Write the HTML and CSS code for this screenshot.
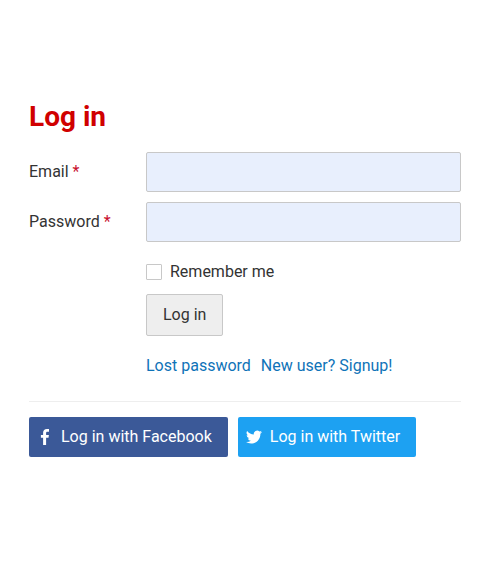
FILE: index.html
```html
<!DOCTYPE html>
<html lang="en">

<head>
    <meta charset="UTF-8">
    <meta name="viewport" content="width=device-width, initial-scale=1.0">
    <title>Log in</title>
    <link rel="stylesheet" href="styles.css">
</head>

<body>
    <main class="login">
        <h1>Log in</h1>

        <form class="login-form">
            <div class="form-group">
                <label for="email">Email <span class="required">*</span></label>
                <input type="email" id="email" class="form-control" required>
            </div>
            <div class="form-group">
                <label for="password">Password <span class="required">*</span></label>
                <input type="password" id="password" class="form-control" required>
            </div>
            <div class="form-actions">
                <label class="remember">
                    <input type="checkbox" id="remember">
                    <span>Remember me</span>
                </label>
                <button type="submit" class="btn-submit">Log in</button>
                <div class="links">
                    <a href="#">Lost password</a>
                    <a href="#">New user? Signup!</a>
                </div>
            </div>
        </form>

        <!-- Social login -->
        <div class="social">
            <a href="#" class="btn-social facebook">
                <svg viewBox="0 0 16 16" width="16" height="16" fill="currentColor">
                    <path d="M6.1 16V8.8H3.9V5.9h2.2V3.8C6.1 1.3 7.6 0 9.9 0c1 0 1.9.1 2.1.1v2.7h-1.5c-1.2 0-1.4.6-1.4 1.4v1.7h2.8l-.4 2.9H9.1V16z" />
                </svg>
                <span>Log in with Facebook</span>
            </a>
            <a href="#" class="btn-social twitter">
                <svg viewBox="0 0 16 16" width="16" height="16" fill="currentColor">
                    <path d="M16 3.04a6.6 6.6 0 0 1-1.89.52 3.3 3.3 0 0 0 1.45-1.82 6.6 6.6 0 0 1-2.09.8A3.28 3.28 0 0 0 7.88 5.53 9.32 9.32 0 0 1 1.11 2.1a3.28 3.28 0 0 0 1.02 4.38 3.3 3.3 0 0 1-1.49-.41v.04a3.28 3.28 0 0 0 2.63 3.22 3.3 3.3 0 0 1-1.48.06 3.28 3.28 0 0 0 3.07 2.28A6.6 6.6 0 0 1 0 13.03a9.29 9.29 0 0 0 5.03 1.47c6.04 0 9.34-5 9.34-9.34l-.01-.42A6.7 6.7 0 0 0 16 3.04z" />
                </svg>
                <span>Log in with Twitter</span>
            </a>
        </div>
    </main>
</body>

</html>
```
FILE: styles.css
```css
:root {
    --primary-color: #d00000;
    --text-color: #333;
    --link-color: #0f73b8;
    --border-color: #c8c8c8;
}

* {
    margin: 0;
    padding: 0;
    box-sizing: border-box;
}

body {
    background-color: #fff;
    color: var(--text-color);
    font-family: Roboto, "Liberation Sans", sans-serif;
    font-size: 16px;
    line-height: 24px;
}

a {
    color: var(--link-color);
    text-decoration: none;
}

.login {
    width: 432px;
    margin: 0 0 0 29px;
    padding-top: 99px;
}

h1 {
    margin-bottom: 17px;
    color: var(--primary-color);
    font-size: 28px;
    font-weight: 700;
    line-height: 36px;
}

.form-group {
    display: grid;
    grid-template-columns: 117px 1fr;
    align-items: center;
    margin-bottom: 10px;
}

.required {
    color: #c8102e;
}

.form-control {
    width: 100%;
    height: 40px;
    padding: 0 10px;
    border: 1px solid var(--border-color);
    border-radius: 2px;
    background-color: #e8effd;
    font: inherit;
}

.form-actions {
    display: flex;
    flex-direction: column;
    align-items: flex-start;
    margin: 18px 0 0 117px;
}

.remember {
    display: flex;
    align-items: center;
    gap: 8px;
    margin-bottom: 10px;
}

.remember input {
    width: 16px;
    height: 16px;
    border: 1px solid var(--border-color);
    border-radius: 1px;
    background-color: #fff;
    appearance: none;
}

.btn-submit {
    height: 42px;
    padding: 0 16px;
    border: 1px solid var(--border-color);
    border-radius: 2px;
    background-color: #eee;
    color: var(--text-color);
    font: inherit;
    cursor: pointer;
}

.links {
    display: flex;
    gap: 10px;
    margin: 18px 0 23px;
}

/* Social buttons */
.social {
    display: flex;
    gap: 10px;
    padding-top: 15px;
    border-top: 1px solid #eee;
}

.btn-social {
    display: flex;
    align-items: center;
    gap: 8px;
    height: 40px;
    padding: 0 16px 0 8px;
    border-radius: 2px;
    color: #fff;
}

.facebook {
    background-color: #3b5998;
}

.twitter {
    background-color: #1da1f2;
}
```
